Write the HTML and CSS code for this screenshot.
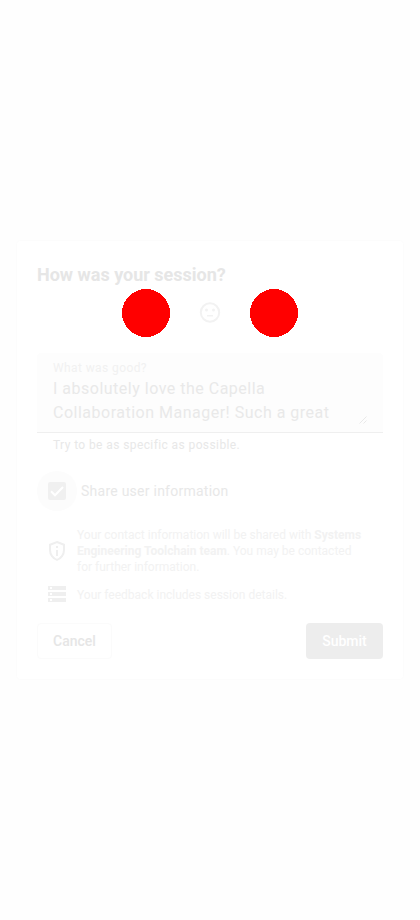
FILE: index.html
```html
<!DOCTYPE html>
<html lang="en">
<head>
<meta charset="utf-8">
<title>Session feedback</title>
<link rel="stylesheet" href="styles.css">
</head>
<body>
<main class="dialog">
  <h1 class="title">How was your session?</h1>
  <div class="ratings">
    <svg class="dot" viewBox="0 0 48 48"><circle cx="24" cy="24" r="24" fill="#f00" shape-rendering="crispEdges"/></svg>
    <svg class="face" viewBox="0 0 24 24"><circle cx="12" cy="11.500" r="9.200" fill="none" stroke="currentColor" stroke-width="2"/><circle cx="8.500" cy="9" r="1.500" fill="currentColor"/><circle cx="15.500" cy="9" r="1.500" fill="currentColor"/><path d="M9 14h6v1.500H9z" fill="currentColor"/></svg>
    <svg class="dot" viewBox="0 0 48 48"><circle cx="24" cy="24" r="24" fill="#f00" shape-rendering="crispEdges"/></svg>
  </div>
  <div class="field">
    <div class="label">What was good?</div>
    <div class="text">I absolutely love the Capella<br>Collaboration Manager! Such a great</div>
    <svg class="grip" viewBox="0 0 8 8"><path d="M.5 7.500l7-7M4.500 7.500l3-3" fill="none" stroke="currentColor"/></svg>
  </div>
  <div class="hint">Try to be as specific as possible.</div>
  <div class="check">
    <span class="ripple"><svg class="box" viewBox="0 0 18 18"><rect width="18" height="18" rx="2" fill="currentColor"/><path d="M3 9.300l4 4 8-8.300" fill="none" stroke="#fff" stroke-width="2"/></svg></span>
    <span class="check-label">Share user information</span>
  </div>
  <div class="info contact">
    <svg class="icon" viewBox="0 0 24 24"><path d="M12 3l7 2.700V11c0 4.500-3 8.600-7 9.900C8 19.600 5 15.500 5 11V5.700z" fill="none" stroke="currentColor" stroke-width="2"/><path d="M11 7h2v2h-2zM11 11h2v6h-2z" fill="currentColor"/></svg>
    <p>Your contact information will be shared with <b>Systems Engineering Toolchain team</b>. You may be contacted for further information.</p>
  </div>
  <div class="info details">
    <svg class="icon" viewBox="0 0 24 24"><path fill="currentColor" fill-rule="evenodd" d="M3 19h18v-4H3v4zm2-3h2v2H5v-2zM3 3v4h18V3H3zm4 3H5V4h2v2zm-4 7h18V9H3v4zm2-3h2v2H5v-2z"/></svg>
    <p>Your feedback includes session details.</p>
  </div>
  <div class="actions">
    <button class="btn cancel">Cancel</button>
    <button class="btn submit">Submit</button>
  </div>
</main>
</body>
</html>
```
FILE: styles.css
```css
* { box-sizing: border-box; }
body {
  margin: 0;
  height: 920px;
  display: flex;
  align-items: center;
  justify-content: center;
  background: #fefefe;
  font-family: Roboto, sans-serif;
  color: #e8e8e8;
}
.dialog {
  width: 386px;
  height: 438px;
  padding: 20px;
  border-radius: 4px;
  background: #fff;
  box-shadow: 0 0 1px 1px #fcfcfc;
}
.title {
  margin: 0;
  font-size: 18px;
  line-height: 28px;
  font-weight: 700;
  color: #e6e6e6;
}
.ratings {
  display: flex;
  justify-content: center;
  align-items: center;
  gap: 28px;
  height: 48px;
}
.dot { width: 48px; height: 48px; }
.face { width: 24px; height: 24px; color: #f2f2f2; }
.field {
  position: relative;
  height: 80px;
  margin-top: 16px;
  padding: 7px 16px 0;
  border-bottom: 1px solid #efefef;
  border-radius: 4px 4px 0 0;
  background: #fdfdfd;
}
.label {
  font-size: 12px;
  line-height: 17px;
  letter-spacing: .4px;
  color: #f1f1f1;
}
.text {
  font-size: 16px;
  line-height: 24px;
  letter-spacing: .5px;
  color: #e9e9e9;
  white-space: nowrap;
}
.grip {
  position: absolute;
  right: 16px;
  bottom: 8px;
  width: 8px;
  height: 8px;
  color: #e9e9e9;
}
.hint {
  padding: 2px 16px 0;
  height: 38px;
  font-size: 12px;
  line-height: 20px;
  letter-spacing: .4px;
  color: #e8e8e8;
}
.check { display: flex; align-items: center; height: 40px; }
.ripple {
  display: flex;
  align-items: center;
  justify-content: center;
  width: 40px;
  height: 40px;
  border-radius: 50%;
  background: #fcfcfc;
}
.box { width: 18px; height: 18px; color: #f0f0f0; }
.check-label {
  padding-left: 4px;
  font-size: 14px;
  line-height: 20px;
  letter-spacing: .25px;
  color: #e8e8e8;
}
.info {
  display: flex;
  align-items: center;
  padding-left: 8px;
  gap: 8px;
  font-size: 12px;
  line-height: 16px;
  color: #f2f2f2;
}
.info p { margin: 0; width: 290px; }
.info b { font-weight: 700; }
.icon { flex: none; width: 24px; height: 24px; color: #efefef; }
.contact { margin-top: 16px; }
.details { margin-top: 8px; height: 24px; }
.actions {
  display: flex;
  justify-content: space-between;
  margin-top: 16px;
}
.btn {
  height: 36px;
  border: 0;
  border-radius: 4px;
  padding: 0;
  font: 500 14px/20px Roboto, sans-serif;
}
.cancel {
  width: 75px;
  border: 1px solid #fbfbfb;
  background: #fff;
  color: #e6e6e6;
}
.submit {
  width: 77px;
  background: #ededed;
  color: #fff;
}
```
